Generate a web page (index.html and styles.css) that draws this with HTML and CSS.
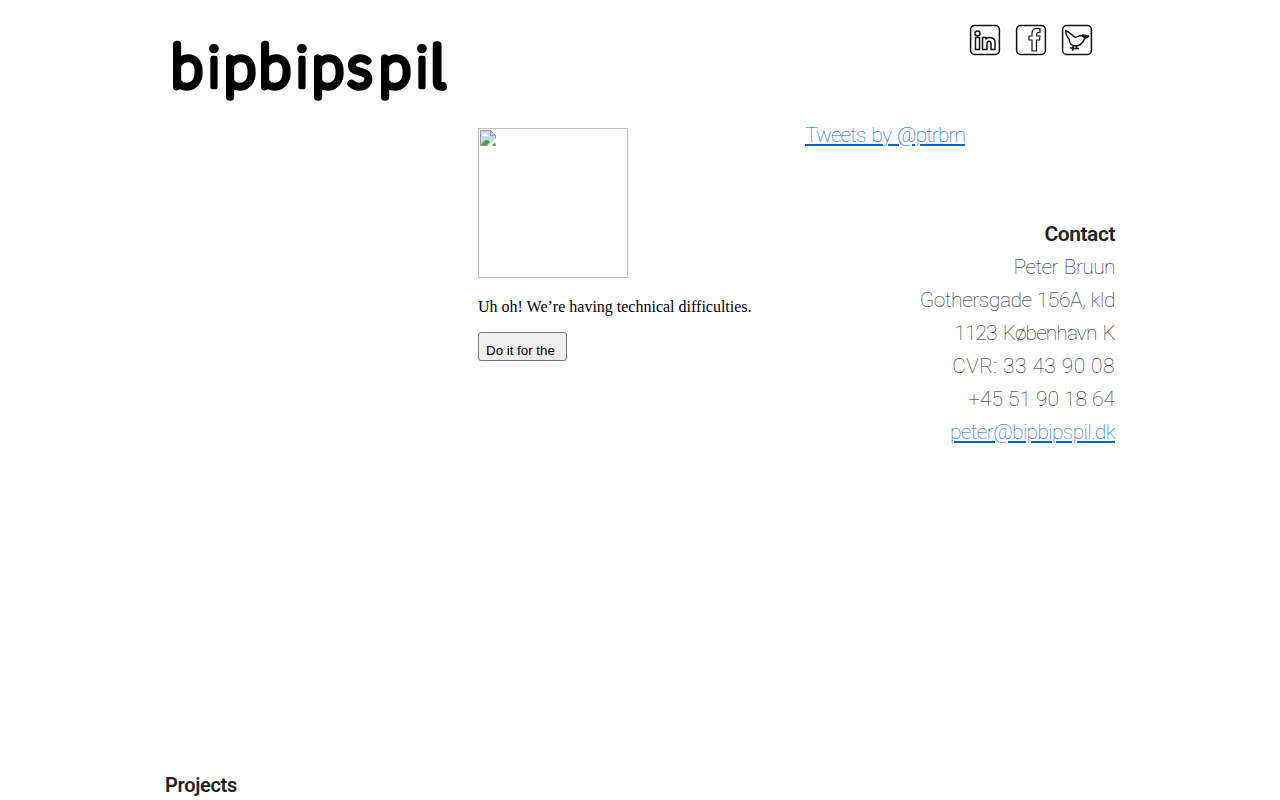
FILE: index.html
```
<!DOCTYPE html>
<html lang="da">
<head>
  <meta charset="UTF-8">
  <meta name="viewport" content="width=device-width, initial-scale=1.0">
  <title>bipbipspil</title>
  <link rel="stylesheet" href="styles.css">
</head>
<body>
  <div class="container">
    <header class="header">
      <svg class="logo" width="300" height="100" viewBox="0 0 300 100">
        <text y="76.500" x="6.500 42.500 59.500 94.500 130.500 147.500 183 214.500 250.500 266">b<tspan class="logo-i">i</tspan>pb<tspan class="logo-i">i</tspan>psp<tspan class="logo-i">i</tspan><tspan class="logo-l">l</tspan></text>
      </svg>
      <nav class="social">
        <a href="#" title="LinkedIn">
          <svg width="32" height="32" viewBox="0 0 32 32">
            <rect x="1.600" y="1.600" width="28.800" height="28.800" rx="4"/>
            <circle cx="8.500" cy="9.500" r="2.500"/>
            <path d="M6.500 13.500h4v12h-4zM13.500 13.500h3.500v1.500c2-2 9-2.500 9 3v7.500h-4v-6c0-3-4-3-4 0v6h-4.500z"/>
          </svg>
        </a>
        <a href="#" title="Facebook">
          <svg width="32" height="32" viewBox="0 0 32 32">
            <rect x="1.600" y="1.600" width="28.800" height="28.800" rx="4"/>
            <path class="thin" d="M17 27v-11h-3v-4h3v-3c0-4 3-5 8-4.500v4c-3-.3-3.500 0-3.500 3.500h3.500l-.5 4h-3v11z"/>
          </svg>
        </a>
        <a href="#" title="Twitter">
          <svg width="32" height="32" viewBox="0 0 32 32">
            <rect x="1.600" y="1.600" width="28.800" height="28.800" rx="4"/>
            <path d="M4.500 6.500c3 1 6 4 9 6.500 3 1 4-2 8-1.500 2-1 4 .5 6 .8l-3.500 1.700c-2 5-5 8-9.500 8-5 0-6-3-6.500-7-2-2-3-5-3.500-8.500z"/>
            <path class="fill" d="M21 11.500l6.500.8-4 1.800z"/>
            <path d="M12 21.500v4M15.500 22v3M9 24h4M13 24.500h5M11 26.500l2-2"/>
          </svg>
        </a>
      </nav>
    </header>

    <main class="columns">
      <div class="video">
        <svg class="missing" width="150" height="150" viewBox="0 0 150 150">
          <rect class="frame" x=".5" y=".5" width="149" height="149"/>
          <path class="sky" d="M2.500 2.500h10l5 5v10h-15z"/>
          <path class="cloud" d="M4 8q0-2 2-2 2-2 3 1 2 0 1 1z"/>
          <path class="hill" d="M3 17q5-8 9-3l-3 3zM13 17l4-3v3z"/>
          <path class="tear" d="M9 18l9-7v3l-5 4z"/>
          <path class="page" d="M2.500 17.500v-15h10l5 5v3M12.500 2.500v5h5M2.500 17.500h7M14 17.500h3.500v-2"/>
        </svg>
        <p>Uh oh! We’re having technical difficulties.</p>
        <button class="retry">Do it for the</button>
      </div>
      <div class="side">
        <a class="tweets" href="#">Tweets by @ptrbrn</a>
        <address class="contact">
          <h2>Contact</h2>
          <span class="name">Peter Bruun</span>
          <span class="street">Gothersgade 156A, kld</span>
          <span class="city">1123 København K</span>
          <span class="cvr">CVR: 33 43 90 08</span>
          <span class="phone">+45 51 90 18 64</span>
          <a class="mail" href="#">peter@bipbipspil.dk</a>
        </address>
      </div>
    </main>

    <h2 class="projects">Projects</h2>
  </div>
</body>
</html>
```
FILE: styles.css
```
body {
  margin: 0;
  height: 800px;
  overflow: hidden;
  background: #fff;
  color: #222;
  font: 100 21px/33px Roboto, "Open Sans", sans-serif;
}
.container {
  width: 950px;
  margin: 0 auto;
}
.header {
  display: flex;
  justify-content: space-between;
  height: 119px;
}
/* Logo */
.logo {
  margin-top: 10px;
}
.logo text {
  font: 100 57px Lato, sans-serif;
  fill: #000;
  stroke: #000;
  stroke-width: 7.5;
  stroke-linejoin: round;
}
.logo .logo-i {
  font-size: 58px;
  font-weight: 300;
  stroke-width: 4.5;
}
.logo .logo-l {
  font-family: Inter, sans-serif;
  font-feature-settings: "cv05", "ss02";
}
.social {
  display: flex;
  gap: 14px;
  height: 32px;
  margin: 24px 22px 0 0;
}
.social svg {
  display: block;
  fill: none;
  stroke: #111;
  stroke-width: 1.5;
  stroke-linejoin: round;
}
.social .thin {
  stroke-width: 1.2;
}
.social .fill {
  fill: #111;
}
.columns {
  display: flex;
  justify-content: space-between;
  height: 650px;
}
/* Video */
.video {
  width: 300px;
  margin: 9px 0 0 313px;
  color: #000;
  font: 16px/18px "Liberation Serif", serif;
}
.video p {
  margin: 20px 0 16px;
}
.missing {
  display: block;
  fill: none;
}
.frame {
  stroke: #c0c0c0;
}
.sky {
  fill: #c6d8f5;
}
.cloud, .tear {
  fill: #fff;
}
.hill {
  fill: #4aa52e;
}
.page {
  stroke: #999;
}
.retry {
  display: block;
  width: 89px;
  height: 29px;
  padding: 8px 6px 0 7px;
  border: 1px solid #767676;
  border-radius: 3px;
  background: #efefef;
  color: #000;
  font: 13.333px "Liberation Sans", sans-serif;
  text-align: left;
  white-space: nowrap;
}
.side {
  display: flex;
  flex-direction: column;
  width: 310px;
}
.side a {
  color: #06c;
  text-decoration-thickness: 2px;
  text-underline-offset: 2px;
}
.tweets {
  align-self: flex-start;
  letter-spacing: -0.95px;
  word-spacing: 2px;
}
.contact {
  display: flex;
  flex-direction: column;
  align-items: flex-end;
  margin-top: 66px;
  font-style: normal;
}
.name {
  letter-spacing: -0.6px;
  word-spacing: 1.5px;
}
.street {
  letter-spacing: -0.45px;
  word-spacing: 0.5px;
}
.city {
  letter-spacing: -0.94px;
  word-spacing: 2px;
}
.cvr {
  letter-spacing: 0.45px;
}
.mail {
  letter-spacing: -0.63px;
}
h2 {
  margin: 0;
  font-size: 21px;
  font-weight: 600;
  line-height: 33px;
  letter-spacing: -0.45px;
}
.projects {
  font-size: 20px;
  letter-spacing: -0.3px;
}
```
